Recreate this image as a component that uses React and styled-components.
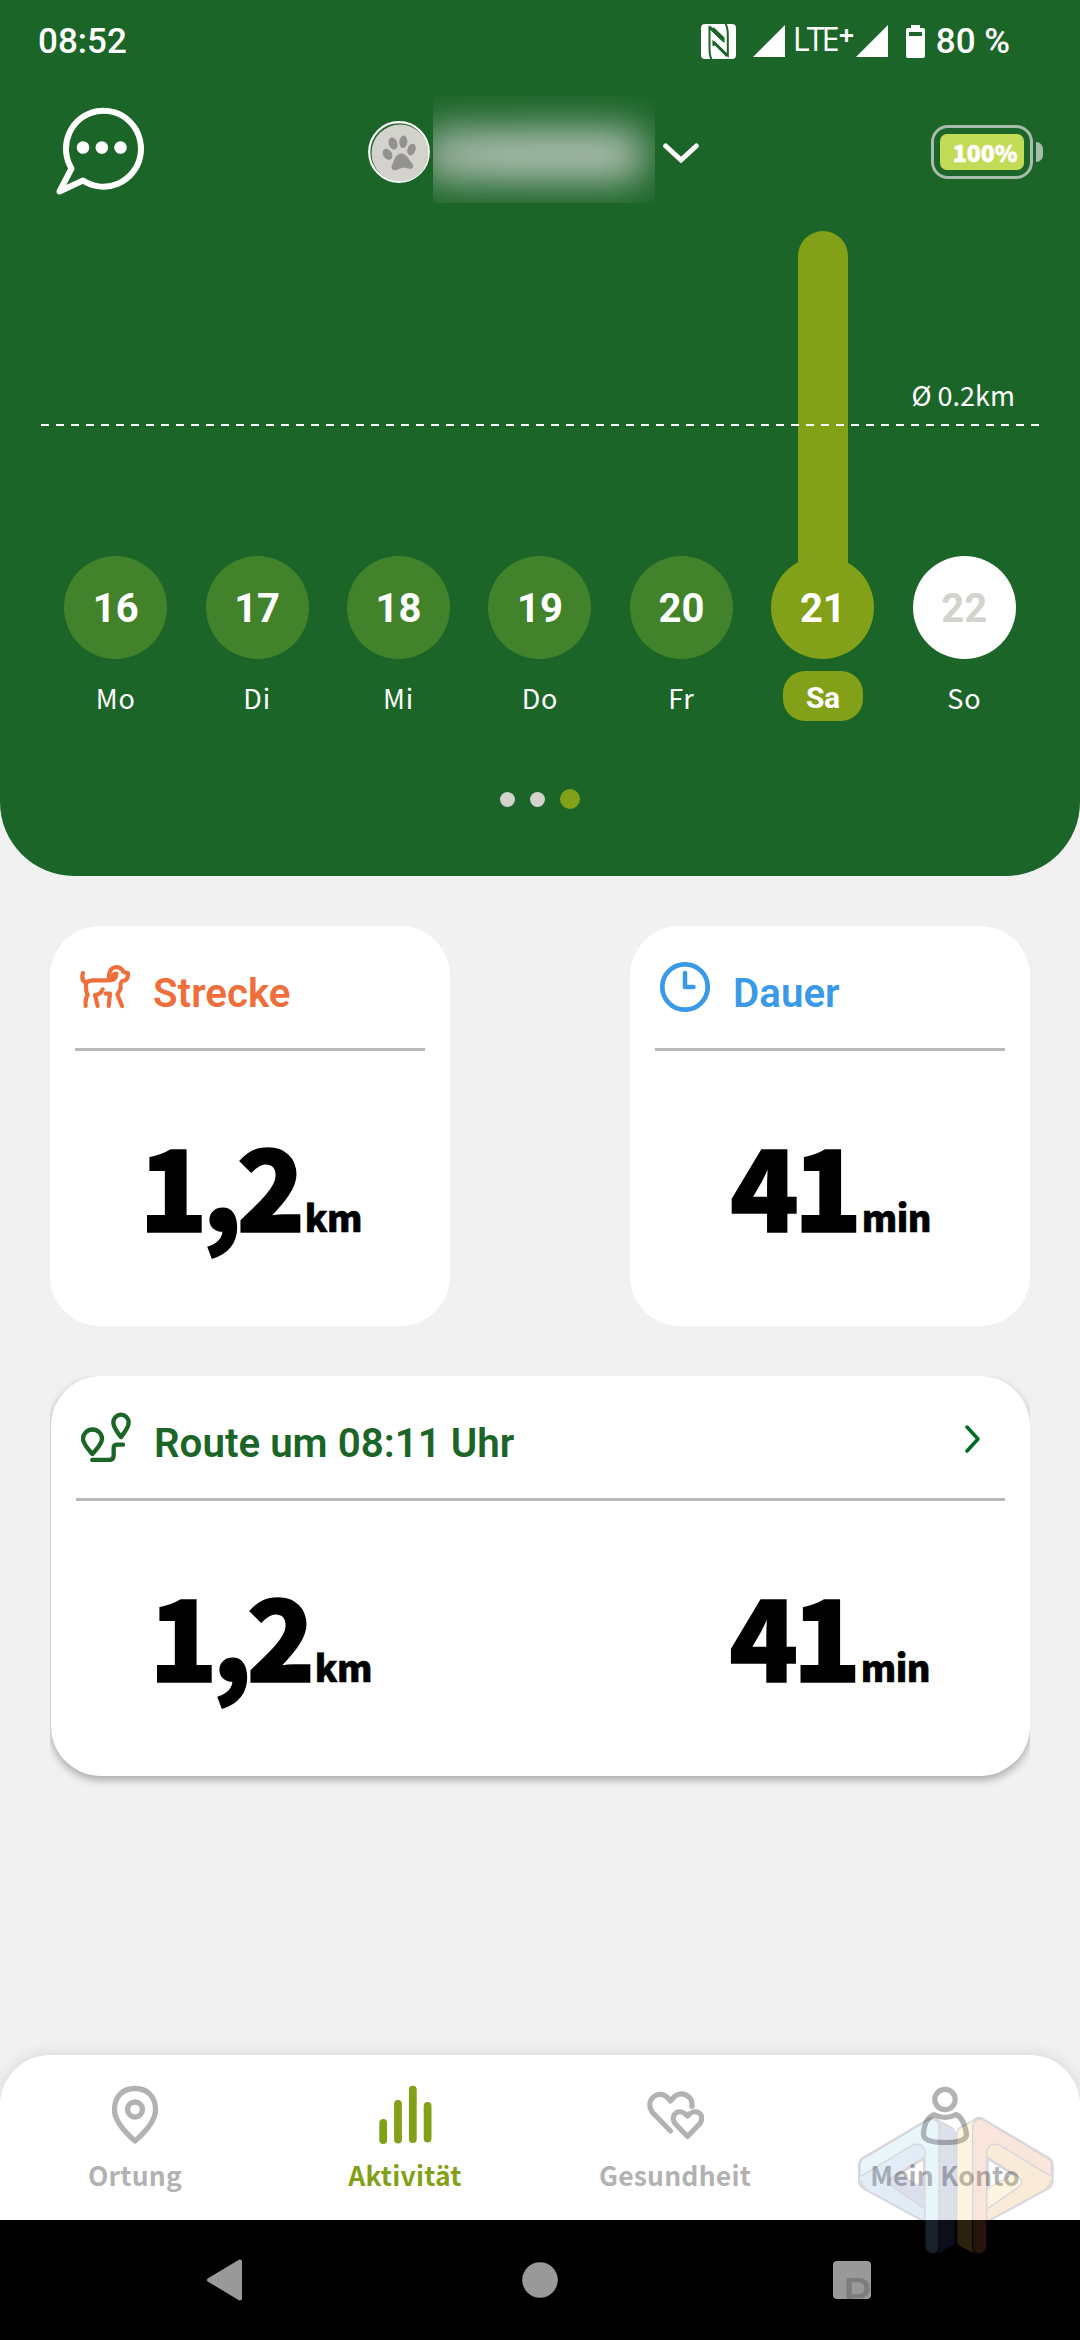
import React, { useState } from 'react';
import styled, { createGlobalStyle } from 'styled-components';

const GlobalStyle = createGlobalStyle`
  body {
    margin: 0;
    background: #f1f1f1;
    font-family: 'Noto Sans CJK SC', 'Noto Sans', sans-serif;
  }
  svg {
    display: block;
    flex: none;
  }
`;

const Screen = styled.div`
  position: relative;
  display: flex;
  flex-direction: column;
  width: 1080px;
  height: 2340px;
  overflow: hidden;
  background: #f1f1f1;
`;

const Header = styled.header`
  display: flex;
  flex-direction: column;
  height: 876px;
  border-radius: 0 0 74px 74px;
  background: #1b6528;
  color: #fff;
`;

const StatusBar = styled.div`
  display: flex;
  align-items: center;
  height: 82px;
  padding: 0 70px 0 38px;
  font: 500 35px Roboto, sans-serif;
`;

const Clock = styled.span`
  margin-right: auto;
`;

const Signals = styled.div`
  display: flex;
  align-items: center;
  margin-left: 17px;
`;

const Network = styled.span`
  width: 58px;
  margin: 0 5px 3px 8px;
  font: 400 32.5px 'Open Sans', sans-serif;
  line-height: 1;
  letter-spacing: -3px;
  white-space: nowrap;

  sup {
    margin-left: 2px;
    font-size: 27px;
    font-weight: 700;
    line-height: 0;
    vertical-align: 6px;
  }
`;

const AppBar = styled.div`
  display: flex;
  align-items: center;
  height: 149px;
  padding: 0 37px 10px 55px;
  box-sizing: border-box;
`;

const PetSelect = styled.div`
  display: flex;
  align-items: center;
  margin-left: 223px;
`;

const HiddenName = styled.div`
  display: flex;
  align-items: center;
  width: 222px;
  height: 107px;
  margin: 0 8px 4px 3px;
  overflow: hidden;

  &::before {
    content: '';
    flex: none;
    width: 224px;
    height: 50px;
    margin: 10px 0 0 -12px;
    border-radius: 14px;
    background: linear-gradient(90deg, #a3b5a7, #b9c5bb 35%, #bbc7bd 80%, #b3c1b5);
    filter: blur(20px);
  }
`;

const Battery = styled.div`
  display: flex;
  align-items: center;
  gap: 3px;
  margin-left: auto;

  &::after {
    content: '';
    width: 7px;
    height: 20px;
    border-radius: 0 10px 10px 0;
    background: #a9bbab;
  }
`;

const BatteryShell = styled.div`
  width: 102px;
  height: 54px;
  padding: 6px;
  box-sizing: border-box;
  border: 3px solid #a9bbab;
  border-radius: 17px;
`;

const BatteryLevel = styled.div`
  display: flex;
  align-items: center;
  justify-content: center;
  height: 36px;
  padding-left: 6px;
  border-radius: 7px;
  background: #c3dc57;
  font-size: 23px;
  font-weight: 900;
  line-height: 32px;
  -webkit-text-stroke: 0.6px #fff;
`;

const Chart = styled.div`
  position: relative;
  display: grid;
  grid-template-columns: repeat(7, 1fr);
  height: 490px;
  padding: 0 45px;
`;

const Average = styled.div`
  position: absolute;
  top: 148px;
  left: 41px;
  width: 999px;
  z-index: 2;
  padding-right: 25px;
  box-sizing: border-box;
  text-align: right;
  font-size: 27px;
  line-height: 32px;

  &::after {
    content: '';
    display: block;
    height: 2px;
    margin: 13px -25px 0 0;
    background: repeating-linear-gradient(90deg, #fff 0 8px, transparent 8px 15px);
  }
`;

const Day = styled.div`
  display: flex;
  flex-direction: column;
  align-items: center;
`;

const BarTrack = styled.div`
  display: flex;
  align-items: flex-end;
  height: 340px;
  margin-bottom: -15px;
`;

const Bar = styled.div`
  width: 50px;
  border-radius: 25px 25px 0 0;
  background: #82a018;
`;

const DayNumber = styled.div`
  z-index: 1;
  width: 103px;
  height: 103px;
  border-radius: 50%;
  background: ${(p) => (p.$state === 'active' ? '#82a018' : p.$state === 'future' ? '#fff' : '#42822a')};
  color: ${(p) => (p.$state === 'future' ? '#d3d2cd' : '#fff')};
  font: 700 40px Roboto, sans-serif;
  line-height: 106px;
  text-align: center;
`;

const DayName = styled.div`
  min-width: ${(p) => (p.$active ? '80px' : 'auto')};
  height: 50px;
  margin-top: 12px;
  border-radius: 22px;
  background: ${(p) => (p.$active ? '#82a018' : 'transparent')};
  font: ${(p) => (p.$active ? "700 30px Roboto, sans-serif" : "400 27px 'Noto Sans CJK SC', sans-serif")};
  line-height: ${(p) => (p.$active ? '53px' : '54px')};
  letter-spacing: ${(p) => (p.$active ? '-0.5px' : '0.8px')};
  text-align: center;
`;

const Pager = styled.div`
  display: flex;
  align-items: center;
  justify-content: center;
  gap: 15px;
  height: 20px;
  margin-top: 68px;
`;

const Dot = styled.i`
  width: ${(p) => (p.$active ? 20 : 15)}px;
  height: ${(p) => (p.$active ? 20 : 15)}px;
  border-radius: 50%;
  background: ${(p) => (p.$active ? '#82a018' : '#d3d2cd')};
`;

const Main = styled.main`
  display: flex;
  flex-direction: column;
  gap: 50px;
  flex: 1;
  padding: 50px 50px 0;
`;

const CardRow = styled.div`
  display: flex;
  justify-content: space-between;
`;

const Card = styled.section`
  width: ${(p) => (p.$wide ? '979px' : '400px')};
  margin-left: ${(p) => (p.$wide ? '1px' : '0')};
  height: 400px;
  padding: 0 25px;
  box-sizing: border-box;
  border-radius: 50px;
  background: #fff;
  box-shadow: ${(p) => (p.$wide ? '0 4px 8px rgba(0, 0, 0, 0.3)' : 'none')};
`;

/* Keeps the elevated card's shadow inside the content column */
const ShadowClip = styled.div`
  height: 430px;
  overflow: hidden;
`;

const CardHeader = styled.div`
  display: flex;
  align-items: center;
  height: 122px;
  padding: 0 24px 0 5px;
  border-bottom: 3px solid #b8b8b8;
  color: ${(p) => p.$color};
`;

const CardTitle = styled.h2`
  margin: 12px auto 0 23px;
  font: 600 40.3px Roboto, sans-serif;
`;

const Values = styled.div`
  display: flex;
  justify-content: ${(p) => (p.$split ? 'space-between' : 'center')};
  padding: ${(p) => (p.$split ? '0 75px 0 73px' : '0 0 0 1px')};
`;

const Value = styled.div`
  display: flex;
  align-items: baseline;
  height: 274px;
  color: #000;
  font-size: 113px;
  font-weight: 900;
  line-height: 265px;
  letter-spacing: -5.5px;
  -webkit-text-stroke: 1.6px #000;

  small {
    margin-left: 5px;
    font-size: 36px;
    line-height: 1;
    letter-spacing: -0.5px;
    -webkit-text-stroke: 0.6px #000;
  }
`;

const TabBar = styled.nav`
  display: grid;
  grid-template-columns: repeat(4, 1fr);
  height: 165px;
  border-radius: 50px 50px 0 0;
  background: #fff;
  box-shadow: 0 0 16px rgba(0, 0, 0, 0.12);
`;

const Tab = styled.button`
  display: flex;
  flex-direction: column;
  align-items: center;
  gap: 7px;
  padding: 30px 0 0;
  border: 0;
  background: none;
  color: ${(p) => (p.$active ? '#82a018' : '#b2b2b2')};
  font: 700 26.5px 'Noto Sans CJK SC', sans-serif;
  line-height: 45px;
  letter-spacing: 0.2px;
`;

const SystemNav = styled.div`
  display: grid;
  grid-template-columns: 450px 180px 444px;
  align-items: center;
  justify-items: center;
  height: 120px;
  background: #000;
`;

const Watermark = styled.svg`
  position: absolute;
  left: 820px;
  top: 2080px;
  opacity: 0.175;
  pointer-events: none;
`;

const days = [
  { num: 16, name: 'Mo', bar: 0 },
  { num: 17, name: 'Di', bar: 0 },
  { num: 18, name: 'Mi', bar: 0 },
  { num: 19, name: 'Do', bar: 0 },
  { num: 20, name: 'Fr', bar: 0 },
  { num: 21, name: 'Sa', bar: 340 },
  { num: 22, name: 'So', bar: 0, future: true },
];

const line = { fill: 'none', stroke: 'currentColor', strokeLinecap: 'round', strokeLinejoin: 'round' };

const NfcIcon = () => (
  <svg width="35" height="35" viewBox="0 0 35 35" fill="none">
    <rect width="35" height="35" rx="4" fill="#fff" />
    <g stroke="#1b6528" strokeWidth="2">
      <path d="M10.500 35Q8.500 32 8.500 24V3.500L22.500 17V14L12 4" />
      <path d="M24.500 0Q26.800 3 26.800 11V31.500L12.500 18V22" />
    </g>
    <path d="M8.500 3L22.500 16.500M26.500 32L12.500 18" stroke="#1b6528" strokeWidth="3" />
  </svg>
);

const SignalIcon = () => (
  <svg width="32" height="32" viewBox="0 0 32 32" fill="#fff">
    <path d="M32 0V32H0Z" />
  </svg>
);

const StatusBattery = () => (
  <svg width="48" height="33" viewBox="-18 0 48 33">
    <path d="M5 3V0H14V3H17Q19 3 19 5V31Q19 33 17 33H2Q0 33 0 31V5Q0 3 2 3ZM3 7V11H16V7Z" fill="#fff" fillRule="evenodd" />
  </svg>
);

const ChatIcon = () => (
  <svg width="90" height="90" viewBox="0.500 0.500 90 90">
    <path d="M17 62A37.500 38 0 1 1 28.500 74L5 85Z" stroke="#fff" strokeWidth="6" fill="none" strokeLinejoin="round" />
    <g fill="#fff">
      <circle cx="28.500" cy="41" r="6.300" />
      <circle cx="47.300" cy="41" r="6.300" />
      <circle cx="66" cy="41" r="6.300" />
    </g>
  </svg>
);

const PawAvatar = () => (
  <svg width="62" height="62" viewBox="0 0 62 62">
    <circle cx="31" cy="31" r="29.800" fill="none" stroke="#fff" strokeWidth="2.200" />
    <circle cx="32" cy="32" r="28.500" fill="#d3d2cd" />
    <g fill="#949290">
      <ellipse cx="19.500" cy="33.300" rx="4.300" ry="6" transform="rotate(-35 19.500 33.300)" />
      <ellipse cx="25" cy="22.500" rx="4.300" ry="6.200" transform="rotate(-18 25 22.500)" />
      <ellipse cx="35.300" cy="20.800" rx="4" ry="6.200" transform="rotate(5 35.300 20.800)" />
      <ellipse cx="43.500" cy="28.500" rx="4" ry="6" transform="rotate(20 43.500 28.500)" />
      <path d="M33 32.500C38 32 40.500 38 43.500 41.500C47.500 46.500 44 48.500 41 47.500C36 46 34 46.500 30 48.500C25 50.500 22 48 24.500 43C26.500 38 28 33 33 32.500Z" />
    </g>
  </svg>
);

const ChevronDown = () => (
  <svg width="36" height="22" viewBox="0 -1 36 22">
    <path d="M2.700 4L18 18L33.300 4" {...line} strokeWidth="5" strokeLinejoin="miter" />
  </svg>
);

const DogIcon = () => (
  <svg width="50" height="50" viewBox="120 155 150 150">
    <g {...line} strokeWidth="12.500">
      <path d="M129 188Q122 211 139 217Q148 209 160 210H210Q230 209 229 190Q218 190 218 203" />
      <path d="M207 206Q205 176 224 171Q242 168 251 185L264 189Q265 211 247 212Q240 216 242 236L232 252L246 287" />
      <path d="M138 218Q137 243 143 254Q135 266 137 287" />
      <path d="M188 237Q184 252 165 254L173 287" />
      <path d="M197 250H210L206 287" />
    </g>
  </svg>
);

const ClockIcon = () => (
  <svg width="50" height="50" viewBox="0 0 50 50">
    <g {...line}>
      <circle cx="25" cy="25" r="22.700" strokeWidth="4.700" />
      <path d="M25 11V25H33.500" strokeWidth="4.500" />
    </g>
  </svg>
);

const RouteIcon = () => (
  <svg width="50" height="50" viewBox="123 155 150 150">
    <g {...line} strokeWidth="13">
      <path d="M157 281Q129 250 129 236A28 28 0 0 1 186 236Q186 250 157 281Z" />
      <path d="M243 230Q220 202 220 186A23 23 0 0 1 266 186Q266 202 243 230Z" />
      <path d="M157 299H207Q221 299 221 285V263Q221 253 231 253H249" />
    </g>
  </svg>
);

const ChevronRight = () => (
  <svg width="18" height="32" viewBox="0 -2 18 32">
    <path d="M4 4L15 16L4 28" {...line} stroke="#006b24" strokeWidth="3.500" />
  </svg>
);

const PinIcon = () => (
  <svg width="48" height="60" viewBox="0 0 48 60">
    <g {...line} strokeWidth="5.300">
      <path d="M24 56C16 49 3.500 37 3.500 25C3.500 11 12 3.500 24 3.500S44.500 11 44.500 25C44.500 37 32 49 24 56Z" />
      <circle cx="24" cy="24.500" r="7.500" />
    </g>
  </svg>
);

const BarsIcon = () => (
  <svg width="53" height="60" viewBox="0 0 53 60">
    <path d="M4.200 38V55M19 19V54.500M33.800 4.700V54M48.600 21V53.500" {...line} strokeWidth="7.800" />
  </svg>
);

const HeartsIcon = () => (
  <svg width="58" height="60" viewBox="0 0 58 60">
    <g {...line} strokeWidth="5.200">
      <path d="M24.500 46L6.500 27.500C-2 15 12 4 21 12L24.500 16L28 12C35 5 47.500 11 46 21.500" />
      <path d="M41.500 51.500L29 38.500C23 29 34 22 41.500 31C49 22 60 29 54 38.500Z" />
    </g>
  </svg>
);

const PersonIcon = () => (
  <svg width="50" height="60" viewBox="0 0 50 60">
    <g {...line} strokeWidth="5.200">
      <circle cx="25" cy="14.500" r="10.200" />
      <path d="M14 29.500Q25 35.500 36 29.500Q44 33 46.500 49Q47 57.500 25 57.500T3.500 49Q4 34 14 29.500Z" />
    </g>
  </svg>
);

const LogoHalf = ({ light, mid, dark, inner }) => (
  <g stroke="#271a38" strokeWidth="4" strokeLinejoin="round">
    <path
      d="M318 122Q338 104 358 124L392 142Q404 150 404 162V485Q403 493 395 498L350 520Q340 526 325 518Q318 512 318 500V428L130 325Q117 316 117 303V254Q117 241 128 234ZM312 236L236 284L312 328Z"
      fill={mid}
      fillRule="evenodd"
      strokeWidth="6"
    />
    <path d="M356 124L392 144Q403 152 403 162V485Q402 492 395 497L356 518Z" fill={dark} stroke="none" />
    <path d="M312 328L236 284L210 288Q200 306 222 323L312 385Z" fill={inner} stroke="none" />
    <path d="M124 288L272 198Q302 182 315 212V500Q318 520 337 522Q357 520 357 502V138Q352 112 325 120L130 236Q120 242 120 254V282Z" fill={light} />
    <path d="M312 232L220 290Q200 304 218 320L312 386M122 300Q124 314 136 323" fill="none" />
  </g>
);

const tabs = [
  { label: 'Ortung', icon: <PinIcon /> },
  { label: 'Aktivität', icon: <BarsIcon /> },
  { label: 'Gesundheit', icon: <HeartsIcon /> },
  { label: 'Mein Konto', icon: <PersonIcon /> },
];

export default function App() {
  const [selectedDay, setSelectedDay] = useState(21);
  const [activeTab, setActiveTab] = useState('Aktivität');

  const dayState = (day) => {
    if (day.num === selectedDay) return 'active';
    return day.future ? 'future' : 'past';
  };

  return (
    <Screen>
      <GlobalStyle />
      <Header>
        <StatusBar>
          <Clock>08:52</Clock>
          <NfcIcon />
          <Signals>
            <SignalIcon />
            <Network>
              LTE<sup>+</sup>
            </Network>
            <SignalIcon />
          </Signals>
          <StatusBattery />
          <span>80 %</span>
        </StatusBar>

        <AppBar>
          <ChatIcon />
          <PetSelect>
            <PawAvatar />
            <HiddenName />
            <ChevronDown />
          </PetSelect>
          <Battery>
            <BatteryShell>
              <BatteryLevel>100%</BatteryLevel>
            </BatteryShell>
          </Battery>
        </AppBar>

        <Chart>
          {days.map((day) => (
            <Day key={day.num} onClick={() => setSelectedDay(day.num)}>
              <BarTrack>
                <Bar style={{ height: day.bar }} />
              </BarTrack>
              <DayNumber $state={dayState(day)}>{day.num}</DayNumber>
              <DayName $active={day.num === selectedDay}>{day.name}</DayName>
            </Day>
          ))}
          <Average>Ø 0.2km</Average>
        </Chart>

        <Pager>
          <Dot />
          <Dot />
          <Dot $active />
        </Pager>
      </Header>

      <Main>
        <CardRow>
          <Card>
            <CardHeader $color="#ef6f3c">
              <DogIcon />
              <CardTitle>Strecke</CardTitle>
            </CardHeader>
            <Values>
              <Value>
                1,2<small>km</small>
              </Value>
            </Values>
          </Card>
          <Card>
            <CardHeader $color="#3b9ae8">
              <ClockIcon />
              <CardTitle>Dauer</CardTitle>
            </CardHeader>
            <Values>
              <Value>
                41<small>min</small>
              </Value>
            </Values>
          </Card>
        </CardRow>

        <ShadowClip>
          <Card $wide>
            <CardHeader $color="#1b6528">
              <RouteIcon />
              <CardTitle>Route um 08:11 Uhr</CardTitle>
              <ChevronRight />
            </CardHeader>
            <Values $split>
              <Value>
                1,2<small>km</small>
              </Value>
              <Value>
                41<small>min</small>
              </Value>
            </Values>
          </Card>
        </ShadowClip>
      </Main>

      <TabBar>
        {tabs.map((tab) => (
          <Tab key={tab.label} $active={tab.label === activeTab} onClick={() => setActiveTab(tab.label)}>
            {tab.icon}
            {tab.label}
          </Tab>
        ))}
      </TabBar>

      <SystemNav>
        <svg width="36" height="42" viewBox="0 0 36 42">
          <path d="M2 21L33 2.500V39.500Z" fill="#999" stroke="#999" strokeWidth="4" strokeLinejoin="round" />
        </svg>
        <svg width="36" height="36" viewBox="0 0 36 36">
          <circle cx="18" cy="18" r="17.800" fill="#999" />
        </svg>
        <svg width="38" height="38" viewBox="0 0 38 38">
          <rect width="38" height="38" rx="4" fill="#999" />
        </svg>
      </SystemNav>

      <Watermark width="260" height="260" viewBox="0 0 780 780">
        <LogoHalf light="#80c8e1" mid="#5b9acd" dark="#3f56a0" inner="#3f56a0" />
        <g transform="translate(815 0) scale(-1 1)">
          <LogoHalf light="#de723f" mid="#e8922d" dark="#f2c850" inner="#f2c850" />
        </g>
        <text x="70" y="690" fontFamily="Roboto" fontSize="132" fontWeight="500">
          P
        </text>
      </Watermark>
    </Screen>
  );
}
